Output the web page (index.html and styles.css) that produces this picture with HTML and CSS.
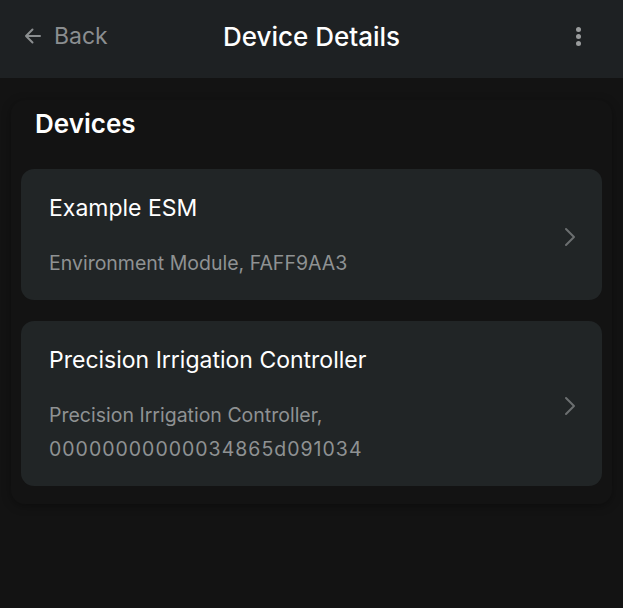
FILE: index.html
```html
<!DOCTYPE html>
<html lang="en">

<head>
    <meta charset="UTF-8" />
    <meta name="viewport" content="width=device-width, initial-scale=1.0" />
    <title>Device Details</title>
    <link rel="stylesheet" href="styles.css">
</head>

<body>

    <header class="top_bar">
        <a class="back" href="#">
            <svg width="20" height="20" viewBox="0 0 20 20" fill="none" stroke="currentColor" stroke-width="2" stroke-linecap="round" stroke-linejoin="round">
                <path d="M17 10H3M9.5 3.5L3 10l6.5 6.5" />
            </svg>
            <span>Back</span>
        </a>
        <h1 class="title">Device Details</h1>
        <button class="menu" aria-label="more">
            <span></span><span></span><span></span>
        </button>
    </header>

    <main class="content">
        <section class="panel">
            <h2 class="heading">Devices</h2>

            <div class="device">
                <div class="info">
                    <div class="name">Example ESM</div>
                    <div class="meta">Environment Module, FAFF9AA3</div>
                </div>
                <svg class="chevron" width="12" height="20" viewBox="0 0 12 20" fill="none" stroke="currentColor" stroke-width="2" stroke-linecap="round" stroke-linejoin="round">
                    <path d="M2 2l8 8-8 8" />
                </svg>
            </div>

            <div class="device">
                <div class="info">
                    <div class="name">Precision Irrigation Controller</div>
                    <div class="meta">Precision Irrigation Controller,<br><span class="serial">00000000000034865d091034</span></div>
                </div>
                <svg class="chevron" width="12" height="20" viewBox="0 0 12 20" fill="none" stroke="currentColor" stroke-width="2" stroke-linecap="round" stroke-linejoin="round">
                    <path d="M2 2l8 8-8 8" />
                </svg>
            </div>
        </section>
    </main>

</body>

</html>
```

FILE: styles.css
```css
* {
    box-sizing: border-box;
    font-family: 'Inter', 'Liberation Sans', sans-serif;
}

body {
    margin: 0;
    padding: 0;
    background-color: #131313;
    color: #fff;
    width: 100vw;
    height: 100vh;
    overflow: hidden;
}

.top_bar {
    height: 78px;
    background-color: #1e2123;
    display: flex;
    align-items: center;
    justify-content: space-between;
    padding: 0 42px 0 23px;
    position: relative;
}

.back {
    display: flex;
    align-items: center;
    gap: 11px;
    color: #8b8e90;
    text-decoration: none;
    font-size: 23px;
    margin-top: -6px;
}

.title {
    position: absolute;
    left: 0;
    right: 0;
    margin: -6px 0 0;
    text-align: center;
    font-size: 26px;
    font-weight: 500;
    pointer-events: none;
}

.menu {
    display: flex;
    flex-direction: column;
    gap: 2px;
    background: none;
    border: 0;
    padding: 0;
    margin-top: -6px;
}

.menu span {
    width: 5px;
    height: 5px;
    border-radius: 50%;
    background-color: #9a9c9d;
}

.content {
    padding: 22px 11px;
}

.panel {
    padding: 6px 10px 18px;
    border-radius: 14px;
    box-shadow: rgba(0, 0, 0, 0.35) 0px 2px 10px;
    display: flex;
    flex-direction: column;
    gap: 21px;
}

.heading {
    margin: 0 0 6px 14px;
    font-size: 26px;
    font-weight: 600;
    line-height: 36px;
}

.device {
    background-color: #212526;
    border-radius: 13px;
    display: flex;
    align-items: center;
    padding: 24px 26px 20px 28px;
}

.info {
    flex: 1;
}

.name {
    font-size: 23px;
    line-height: 30px;
    margin-bottom: 23px;
}

.meta {
    font-size: 19.5px;
    line-height: 34px;
    color: #8f9293;
}

/* digits run wider in the original font */
.serial {
    letter-spacing: 1px;
}

.chevron {
    color: #6c6f70;
}
```
